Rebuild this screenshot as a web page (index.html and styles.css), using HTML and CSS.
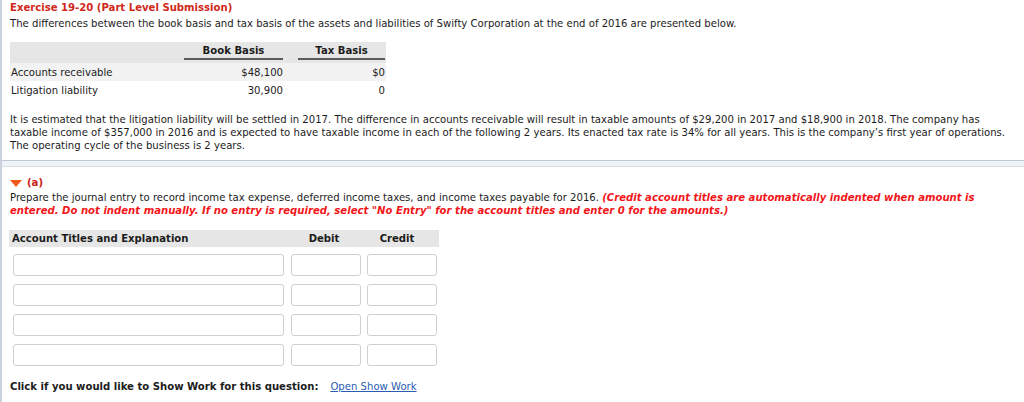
FILE: index.html
```html
<!DOCTYPE html>
<html>
<head>
<meta charset="utf-8">
<link rel="stylesheet" href="styles.css">
</head>
<body>
<div class="page">
  <div class="top">
    <div class="title">Exercise 19-20 (Part Level Submission)</div>
    <div class="intro">The differences between the book basis and tax basis of the assets and liabilities of Swifty Corporation at the end of 2016 are presented below.</div>
    <div class="basis">
      <div class="brow bhead">
        <div></div>
        <div class="bh">Book Basis</div>
        <div class="bh last">Tax Basis</div>
      </div>
      <div class="brow shade">
        <div class="blabel">Accounts receivable</div>
        <div class="bval">$48,100</div>
        <div class="bval">$0</div>
      </div>
      <div class="brow">
        <div class="blabel">Litigation liability</div>
        <div class="bval">30,900</div>
        <div class="bval">0</div>
      </div>
    </div>
    <p class="para">It is estimated that the litigation liability will be settled in 2017. The difference in accounts receivable will result in taxable amounts of $29,200 in 2017 and $18,900 in 2018. The company has taxable income of $357,000 in 2016 and is expected to have taxable income in each of the following 2 years. Its enacted tax rate is 34% for all years. This is the company’s first year of operations. The operating cycle of the business is 2 years.</p>
  </div>
  <div class="band"></div>
  <div class="part">
    <div class="parthead"><span class="tri"></span><span class="plabel">(a)</span></div>
    <p class="prompt">Prepare the journal entry to record income tax expense, deferred income taxes, and income taxes payable for 2016. <em class="warn">(Credit account titles are automatically indented when amount is entered. Do not indent manually. If no entry is required, select "No Entry" for the account titles and enter 0 for the amounts.)</em></p>
    <div class="journal">
      <div class="jhead">
        <div class="jh-acc">Account Titles and Explanation</div>
        <div class="jh-num">Debit</div>
        <div class="jh-num">Credit</div>
      </div>
      <div class="jrow"><input class="in acc" type="text"><input class="in num" type="text"><input class="in num" type="text"></div>
      <div class="jrow"><input class="in acc" type="text"><input class="in num" type="text"><input class="in num" type="text"></div>
      <div class="jrow"><input class="in acc" type="text"><input class="in num" type="text"><input class="in num" type="text"></div>
      <div class="jrow"><input class="in acc" type="text"><input class="in num" type="text"><input class="in num" type="text"></div>
    </div>
    <div class="showwork"><b>Click if you would like to Show Work for this question:</b><a class="swlink" href="#">Open Show Work</a></div>
  </div>
</div>
</body>
</html>
```

FILE: styles.css
```css
html, body {
  margin: 0;
  padding: 0;
  background: #fff;
}
body {
  font-family: "DejaVu Sans", Verdana, sans-serif;
  font-size: 10.1px;
  line-height: 13px;
  color: #1c1c1c;
}
.page {
  border-left: 2px solid #c9d2dd;
  min-height: 402px;
  box-sizing: border-box;
}
.top {
  padding: 1px 8px 8px 8px;
  border-bottom: 1px solid #bfcad6;
}
.title {
  color: #d0281a;
  font-weight: bold;
}
.intro {
  margin-top: 3px;
}
.basis {
  margin-top: 12px;
  width: 376px;
}
.brow {
  display: grid;
  grid-template-columns: 174px 99px 103px;
  height: 18px;
  align-items: center;
}
.bhead {
  background: #e6e6e6;
  height: 21px;
  align-items: start;
}
.bh {
  font-weight: bold;
  text-align: center;
  padding-top: 2px;
  padding-bottom: 1px;
  border-bottom: 2px solid #5a5a5a;
}
.bh.last {
  margin-left: 15px;
  margin-right: 1px;
}
.shade {
  background: #f2f2f2;
}
.blabel {
  padding-left: 1px;
}
.bval {
  text-align: right;
}
.bval:last-child {
  padding-right: 1px;
}
.para {
  margin: 14px 0 0 0;
}
.band {
  height: 5px;
  background: #eef3f8;
  border-bottom: 1px solid #d7dee6;
}
.part {
  padding: 9px 8px 0 8px;
}
.parthead {
  display: flex;
  align-items: center;
  gap: 5px;
  height: 13px;
}
.tri {
  width: 0;
  height: 0;
  border-left: 6px solid transparent;
  border-right: 6px solid transparent;
  border-top: 7px solid #ee5a1c;
  margin-top: 1px;
}
.plabel {
  color: #c8201a;
  font-weight: bold;
}
.prompt {
  margin: 2px 0 0 0;
}
.warn {
  color: #f2161a;
  font-weight: bold;
  font-style: italic;
}
.journal {
  margin-top: 13px;
  width: 430px;
  margin-left: -1px;
}
.jhead {
  display: grid;
  grid-template-columns: 280px 70px 76px;
  background: #e6e6e6;
  height: 17px;
  align-items: center;
  font-weight: bold;
}
.jh-acc {
  padding-left: 3px;
}
.jh-num {
  text-align: center;
}
.jrow {
  display: flex;
  margin-top: 7px;
  margin-left: 4px;
  gap: 7px;
}
.jrow + .jrow {
  margin-top: 8px;
}
.in {
  height: 22px;
  box-sizing: border-box;
  border: 1px solid #cfcfcf;
  border-radius: 3px;
  background: #fff;
  padding: 0 4px;
  font: inherit;
  margin: 0;
  outline: none;
}
.acc {
  width: 271px;
}
.num {
  width: 70px;
}
.num + .num {
  margin-left: -1px;
}
.showwork {
  margin-top: 14px;
  display: flex;
}
.swlink {
  margin-left: 12px;
  color: #2a5db0;
  text-decoration: underline;
}
```
